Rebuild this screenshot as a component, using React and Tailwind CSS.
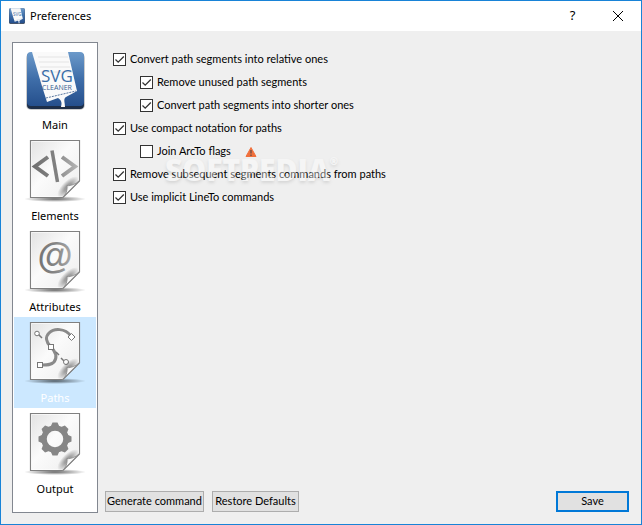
import { useState } from 'react';
import clsx from 'clsx';

const pages = [
  { id: 'main', label: 'Main', icon: LogoIcon },
  { id: 'elements', label: 'Elements', icon: ElementsIcon },
  { id: 'attributes', label: 'Attributes', icon: AttributesIcon },
  { id: 'paths', label: 'Paths', icon: PathsIcon },
  { id: 'output', label: 'Output', icon: OutputIcon },
];

const pathOptions = [
  { id: 'relative', label: 'Convert path segments into relative ones', checked: true },
  { id: 'unused', label: 'Remove unused path segments', checked: true, nested: true },
  { id: 'shorter', label: 'Convert path segments into shorter ones', checked: true, nested: true },
  { id: 'compact', label: 'Use compact notation for paths', checked: true },
  { id: 'arcto', label: 'Join ArcTo flags', checked: false, nested: true, warning: true },
  { id: 'subsequent', label: 'Remove subsequent segments commands from paths', checked: true },
  { id: 'implicit', label: 'Use implicit LineTo commands', checked: true },
];

function LogoArt({ small }) {
  return (
    <>
      <defs>
        <linearGradient id="logoBlue" x1="0" y1="0" x2="0" y2="1">
          <stop offset="0" stopColor="#6c9aca" />
          <stop offset="0.5" stopColor="#3f6ea9" />
          <stop offset="1" stopColor="#254f8c" />
        </linearGradient>
      </defs>
      <rect x="3" y="5" width="59" height="57" rx="5" fill="#000" opacity="0.2" />
      <rect x="4" y="5" width="57" height="56" rx="4" fill="#1d2e48" />
      <rect x="4" y="4" width="57" height="54" rx="4" fill="url(#logoBlue)" />
      <path d="M9 4H45L54 43L43 49C40 51 42 54 42 59H38C39 55 39 53 35 50L24 54L18 35Z" fill="#fafafa" />
      <path
        d="M15 9H45M16 14H46M17 19H47M18 24H49"
        stroke="#e4e4e4"
        strokeWidth="1"
      />
      <path d="M23 50L53 43" stroke="#2f5487" strokeWidth="0.8" strokeDasharray="2 1" />
      <text
        x="18"
        y="34"
        fontFamily="'Open Sans', sans-serif"
        fontSize="17"
        fill="#3a6ea8"
      >
        SVG
      </text>
      {!small && (
        <text x="19" y="42" fontFamily="'Open Sans', sans-serif" fontSize="7" fill="#33608f">
          CLEANER
        </text>
      )}
    </>
  );
}

function LogoIcon() {
  return (
    <svg viewBox="0 0 64 64" className="size-16 shrink-0" aria-hidden="true">
      <LogoArt />
    </svg>
  );
}

function Sheet({ children }) {
  return (
    <svg viewBox="0 0 64 64" className="size-16 shrink-0" fill="none" aria-hidden="true">
      <defs>
        <linearGradient id="paper" x1="0" y1="0" x2="1" y2="1">
          <stop offset="0" stopColor="#e2e2e2" />
          <stop offset="0.45" stopColor="#fbfbfb" />
          <stop offset="1" stopColor="#ededed" />
        </linearGradient>
        <linearGradient id="ink" x1="8" y1="0" x2="56" y2="0" gradientUnits="userSpaceOnUse">
          <stop offset="0" stopColor="#6c6c6c" />
          <stop offset="0.5" stopColor="#858585" />
          <stop offset="1" stopColor="#b8b8b8" />
        </linearGradient>
        <radialGradient id="ground">
          <stop offset="0" stopColor="#000" stopOpacity="0.6" />
          <stop offset="1" stopColor="#000" stopOpacity="0" />
        </radialGradient>
        <radialGradient id="foldShade">
          <stop offset="0.3" stopColor="#000" stopOpacity="0.35" />
          <stop offset="1" stopColor="#000" stopOpacity="0" />
        </radialGradient>
        <linearGradient id="curl" x1="43" y1="46" x2="50" y2="52" gradientUnits="userSpaceOnUse">
          <stop offset="0" stopColor="#d0d0d0" />
          <stop offset="0.5" stopColor="#ffffff" />
          <stop offset="1" stopColor="#c8c8c8" />
        </linearGradient>
        <clipPath id="sheetClip">
          <path d="M7 1H57V42L40 59H7Z" />
        </clipPath>
      </defs>
      <ellipse cx="32" cy="60" rx="31" ry="3" fill="url(#ground)" />
      <path d="M7.500 1.500H56.500V42L40 58.500H7.500Z" fill="url(#paper)" stroke="#808080" strokeWidth="1.200" />
      <path d="M8.500 2.500H55.500V41M8.500 2.500V57.500H39" stroke="#fff" strokeWidth="0.6" />
      {children}
      <g clipPath="url(#sheetClip)">
        <ellipse cx="45" cy="48" rx="14" ry="6" fill="url(#foldShade)" transform="rotate(-45 45 48)" />
      </g>
      <path
        d="M39.500 58.500C43 56 44.500 51 44 46.500C48 47 53 45 56.500 41.500Z"
        fill="url(#curl)"
        stroke="#888"
        strokeWidth="0.8"
      />
    </svg>
  );
}

function ElementsIcon() {
  return (
    <Sheet>
      <path d="M25 18L12 27.500L25 37M39 18L52 27.500L39 37" stroke="url(#ink)" strokeWidth="4" />
      <path d="M29 11.500L34.500 43" stroke="#808080" strokeWidth="3.500" />
    </Sheet>
  );
}

function AttributesIcon() {
  return (
    <Sheet>
      <text
        x="32"
        y="38"
        textAnchor="middle"
        fontFamily="'Liberation Sans', Arial, sans-serif"
        fontWeight="700"
        fontSize="36"
        fill="url(#ink)"
      >
        @
      </text>
    </Sheet>
  );
}

function PathsIcon() {
  return (
    <Sheet>
      <path
        d="M48 15C42 7 31 7 26 12C22 16 23 21 27.500 25.500C34 32 34 37 31 41C28 44.500 23 44 17 44"
        stroke="#8a8a8a"
        strokeWidth="3"
      />
      <path d="M14.500 12.500L19 17M33 31L36 34M38 37L42 41" stroke="#777" strokeWidth="1.500" />
      <g fill="#fff" stroke="#777" strokeWidth="1">
        <circle cx="14" cy="12.500" r="2.300" />
        <rect x="25.500" y="23.500" width="5" height="5" />
        <rect x="14.500" y="41.500" width="5" height="5" />
        <path d="M48.500 12.500L52 16L48.500 19.500L45 16Z" />
        <circle cx="43" cy="41" r="2.500" />
      </g>
    </Sheet>
  );
}

function OutputIcon() {
  const teeth = [0, 45, 90, 135, 180, 225, 270, 315];

  return (
    <Sheet>
      <circle cx="32" cy="27" r="11" stroke="#868686" strokeWidth="5.500" />
      {teeth.map(angle => (
        <path
          key={angle}
          d="M27.500 15L29.500 10.500H34.500L36.500 15Z"
          fill="#868686"
          transform={`rotate(${angle} 32 27)`}
        />
      ))}
    </Sheet>
  );
}

function WarningIcon() {
  return (
    <svg viewBox="0 0 12 12" className="size-3" role="img" aria-label="Warning">
      <path d="M6 1.500L11 10.500H1Z" fill="#f0703c" stroke="#f0703c" strokeLinejoin="round" />
      <path d="M6 4V7.500M6 8.500V10" stroke="#5a4a4a" strokeWidth="1.200" />
    </svg>
  );
}

function CheckBox({ id, label, checked, nested, warning, onChange }) {
  return (
    <div className={clsx('flex h-[23px] items-center', nested && 'pl-[27px]')}>
      <span className="relative flex">
        <input
          id={id}
          type="checkbox"
          checked={checked}
          onChange={() => onChange(id)}
          className="size-[13px] appearance-none border border-[#333] bg-white"
        />
        {checked && (
          <svg viewBox="0 0 13 13" className="pointer-events-none absolute inset-0" aria-hidden="true">
            <path d="M2.500 6.500L5.200 9.200L10.800 3.500" fill="none" stroke="#333" strokeWidth="1.300" />
          </svg>
        )}
      </span>
      <label htmlFor={id} className="pl-1 whitespace-nowrap">
        {label}
      </label>
      {warning && (
        <span className="pl-3.5">
          <WarningIcon />
        </span>
      )}
    </div>
  );
}

export default function App() {
  const [page, setPage] = useState('paths');
  const [options, setOptions] = useState(pathOptions);

  const handleToggle = (id) => {
    setOptions(prev => prev.map(o => (o.id === id ? { ...o, checked: !o.checked } : o)));
  };

  return (
    <div className="flex min-h-screen flex-col border border-[#1883d7] bg-[#efefef] font-['Noto_Sans',sans-serif] text-[11px] text-black">
      <header className="flex h-[30px] items-center bg-white pl-2">
        <svg viewBox="3 3 59 59" className="size-4" aria-hidden="true">
          <LogoArt small />
        </svg>
        <h1 className="grow pl-[5px]">Preferences</h1>
        <button type="button" aria-label="Help" className="flex h-full w-[45px] items-center justify-center text-[13px]">
          ?
        </button>
        <button type="button" aria-label="Close" className="flex h-full w-[46px] items-center justify-center">
          <svg viewBox="0 0 10 10" className="size-[10px]" aria-hidden="true">
            <path d="M0 0L10 10M10 0L0 10" stroke="#000" strokeWidth="1" />
          </svg>
        </button>
      </header>

      <div className="flex grow gap-[7px] px-[11px] py-[11px]">
        <nav className="w-[86px] shrink-0 border border-[#828790] bg-white p-px">
          {pages.map(({ id, label, icon: Icon }) => (
            <button
              key={id}
              type="button"
              onClick={() => setPage(id)}
              className={clsx(
                'flex h-[91px] w-full flex-col items-center pt-1',
                page === id && 'bg-[#cce8ff] text-white'
              )}
            >
              <Icon />
              <span className="leading-[26px]">{label}</span>
            </button>
          ))}
        </nav>

        <main className="flex grow flex-col font-['Lato',sans-serif]">
          <div className="relative grow pt-[6px] pl-2">
            {options.map(option => (
              <CheckBox key={option.id} {...option} onChange={handleToggle} />
            ))}
            <span className="pointer-events-none absolute top-[105px] left-[60px] font-['Open_Sans',sans-serif] text-[30px] font-black text-white opacity-40 [text-shadow:0px_2px_3px_rgba(0,0,0,0.25)]">
              SOFTPEDIA<sup className="-top-4 text-[10px]">®</sup>
            </span>
          </div>
          <footer className="flex gap-2 pb-px">
            <button type="button" className="h-[21px] w-[99px] border border-[#adadad] bg-[#e1e1e1] whitespace-nowrap">
              Generate command
            </button>
            <button type="button" className="h-[21px] w-[87px] border border-[#adadad] bg-[#e1e1e1] whitespace-nowrap">
              Restore Defaults
            </button>
            <button type="button" className="mr-px ml-auto h-[21px] w-[73px] border-2 border-[#0078d7] bg-[#e1e1e1]">
              Save
            </button>
          </footer>
        </main>
      </div>
    </div>
  );
}
